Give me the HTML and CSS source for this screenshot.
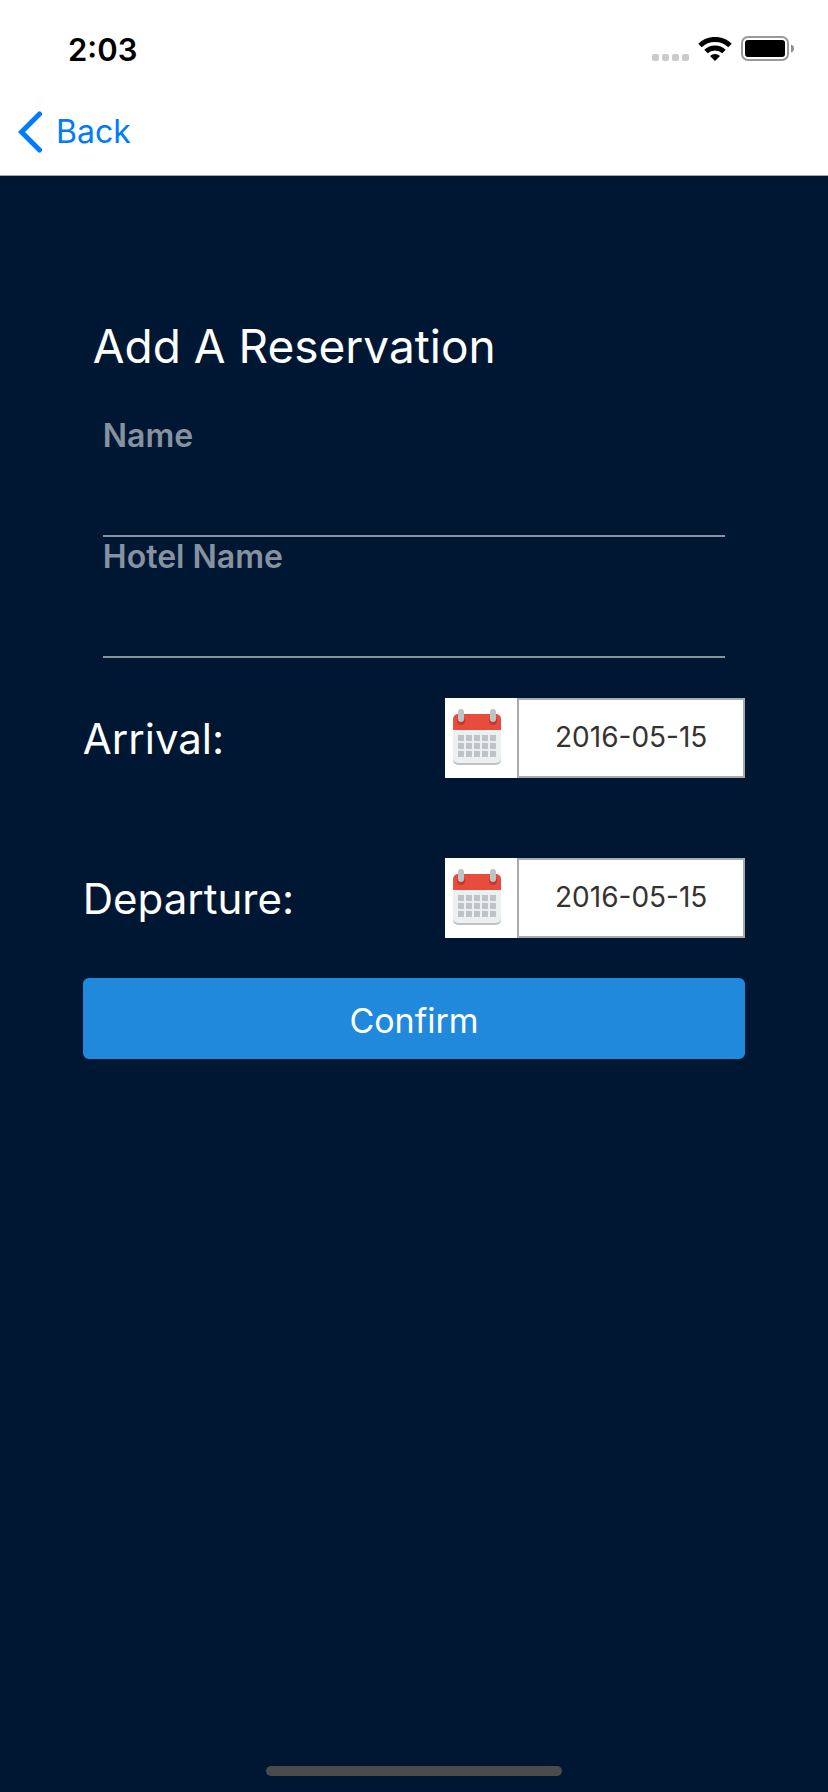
FILE: index.html
```html
<!DOCTYPE html>
<html lang="en">
<head>
<meta charset="utf-8">
<meta name="viewport" content="width=device-width, initial-scale=1">
<title>Add A Reservation</title>
<link rel="stylesheet" href="styles.css">
</head>
<body>
<svg class="symbols" aria-hidden="true">
  <symbol id="calendar" viewBox="0 0 48 56">
    <path d="M0 21h48v30a5 5 0 0 1-5 5H5a5 5 0 0 1-5-5z" fill="#bdc3c7"/>
    <path d="M0 21h48v28a5 5 0 0 1-5 5H5a5 5 0 0 1-5-5z" fill="#ecf0f1"/>
    <path d="M5 5h38a5 5 0 0 1 5 5v11H0V10a5 5 0 0 1 5-5z" fill="#e74c3c"/>
    <circle cx="8" cy="12" r="4" fill="#c0392b"/>
    <circle cx="40" cy="12" r="4" fill="#c0392b"/>
    <rect x="5" y="0" width="6" height="13" rx="3" fill="#bdc3c7"/>
    <rect x="37" y="0" width="6" height="13" rx="3" fill="#bdc3c7"/>
    <path d="M5 26h6v6H5zM13 26h6v6h-6zM21 26h6v6h-6zM29 26h6v6h-6zM37 26h6v6h-6zM5 34h6v6H5zM13 34h6v6h-6zM21 34h6v6h-6zM29 34h6v6h-6zM37 34h6v6h-6zM5 42h6v6H5zM13 42h6v6h-6zM21 42h6v6h-6zM29 42h6v6h-6zM37 42h6v6h-6z" fill="#bdc3c7"/>
  </symbol>
</svg>
<header class="top">
  <div class="status">
    <time class="clock">2:03</time>
    <div class="indicators">
      <svg class="signal" viewBox="0 0 37 24" aria-hidden="true">
        <g fill="#cbcbcb"><rect x="0" y="17" width="7" height="7" rx="2"/><rect x="10" y="17" width="7" height="7" rx="2"/><rect x="20" y="17" width="7" height="7" rx="2"/><rect x="30" y="17" width="7" height="7" rx="2"/></g>
      </svg>
      <svg class="wifi" viewBox="0 0 34 24" aria-hidden="true">
        <path d="M17 24l-5-5a7.400 7.400 0 0 1 10 0z"/>
        <path d="M8 14.500a13 13 0 0 1 18 0" fill="none" stroke="#000" stroke-width="5"/>
        <path d="M2 8.500a21.500 21.500 0 0 1 30 0" fill="none" stroke="#000" stroke-width="5"/>
      </svg>
      <svg class="battery" viewBox="0 0 54 26" aria-hidden="true">
        <rect x="1" y="1" width="46" height="23" rx="6" fill="none" stroke="#999" stroke-width="2"/>
        <rect x="4" y="4" width="40" height="17" rx="3"/>
        <path d="M50 8.500q3 1 3 4t-3 4z" fill="#8e8e8e"/>
      </svg>
    </div>
  </div>
  <nav class="nav">
    <button class="back" type="button">
      <svg class="chevron" viewBox="0 0 24 42" aria-hidden="true"><path d="M21.500 3L3.500 21l18 18" fill="none" stroke="#007aff" stroke-width="5" stroke-linecap="round" stroke-linejoin="miter"/></svg>
      <span>Back</span>
    </button>
  </nav>
</header>
<main class="screen">
  <h1 class="title">Add A Reservation</h1>
  <form class="form">
    <div class="fields">
      <div class="field">
        <label class="field-label" for="name">Name</label>
        <input class="field-input" id="name" type="text">
      </div>
      <div class="field">
        <label class="field-label" for="hotel">Hotel Name</label>
        <input class="field-input" id="hotel" type="text">
      </div>
    </div>
    <div class="dates">
      <div class="date-row">
        <label class="date-label" for="arrival">Arrival:</label>
        <div class="picker">
          <button class="picker-button" type="button" aria-label="Choose arrival date"><svg class="calendar"><use href="#calendar"/></svg></button>
          <input class="picker-input" id="arrival" type="text" value="2016-05-15">
        </div>
      </div>
      <div class="date-row">
        <label class="date-label" for="departure">Departure:</label>
        <div class="picker">
          <button class="picker-button" type="button" aria-label="Choose departure date"><svg class="calendar"><use href="#calendar"/></svg></button>
          <input class="picker-input" id="departure" type="text" value="2016-05-15">
        </div>
      </div>
    </div>
    <button class="confirm" type="submit">Confirm</button>
  </form>
</main>
<footer class="home"><div class="home-bar"></div></footer>
</body>
</html>
```
FILE: styles.css
```css
* {
  box-sizing: border-box;
}

body {
  margin: 0;
  min-height: 100vh;
  display: flex;
  flex-direction: column;
  background: #001734;
  color: #fff;
  font-family: Inter, "Liberation Sans", sans-serif;
}

button,
input {
  margin: 0;
  padding: 0;
  border: 0;
  border-radius: 0;
  background: none;
  font-family: inherit;
}

svg {
  display: block;
}

.symbols {
  position: absolute;
  width: 0;
  height: 0;
}

.top {
  background: #fff;
  border-bottom: 1px solid #a7a7aa;
}

.status {
  display: flex;
  justify-content: space-between;
  align-items: center;
  height: 88px;
  padding: 10px 33px 0 68px;
}

.clock {
  color: #000;
  font-size: 31px;
  font-weight: 600;
}

.indicators {
  display: flex;
  align-items: center;
  gap: 9px;
}

.signal {
  width: 37px;
  height: 24px;
}

.wifi {
  width: 34px;
  height: 24px;
}

.battery {
  width: 54px;
  height: 26px;
}

.nav {
  display: flex;
  align-items: center;
  height: 87px;
  padding-left: 18px;
}

.back {
  display: flex;
  align-items: center;
  gap: 14px;
  color: #007aff;
  font-size: 32px;
}

.chevron {
  width: 24px;
  height: 42px;
}

.screen {
  flex: 1;
  padding: 140px 10% 0;
}

.title {
  margin: 0 10px 40px;
  font-size: 46px;
  font-weight: 400;
  line-height: 60px;
}

.form {
  display: flex;
  flex-direction: column;
  gap: 40px;
}

.fields {
  margin: 0 20px;
}

.field {
  display: flex;
  flex-direction: column;
}

.field-label {
  color: #8792a0;
  font-size: 32px;
  font-weight: 600;
  line-height: 40px;
}

.field-input {
  height: 81px;
  border-bottom: 2px solid #8792a0;
  color: #fff;
  font-size: 32px;
}

.dates {
  display: flex;
  flex-direction: column;
  gap: 80px;
}

.date-row {
  display: flex;
  justify-content: space-between;
  align-items: center;
}

.date-label {
  font-size: 42px;
}

.picker {
  display: flex;
  width: 300px;
  height: 80px;
  background: #fff;
}

.picker-button {
  display: flex;
  align-items: center;
  width: 72px;
  padding: 0 0 2px 8px;
}

.calendar {
  width: 48px;
  height: 56px;
}

.picker-input {
  flex: 1;
  min-width: 0;
  padding-bottom: 2px;
  border: 2px solid #aaa;
  color: #333;
  font-size: 28px;
  text-align: center;
}

.confirm {
  height: 81px;
  padding-top: 3px;
  border-radius: 6px;
  background: #2089dc;
  color: #fff;
  font-size: 34px;
}

.home {
  display: flex;
  justify-content: center;
  padding-bottom: 16px;
}

.home-bar {
  width: 296px;
  height: 10px;
  border-radius: 5px;
  background: #4b4b4b;
}
```
